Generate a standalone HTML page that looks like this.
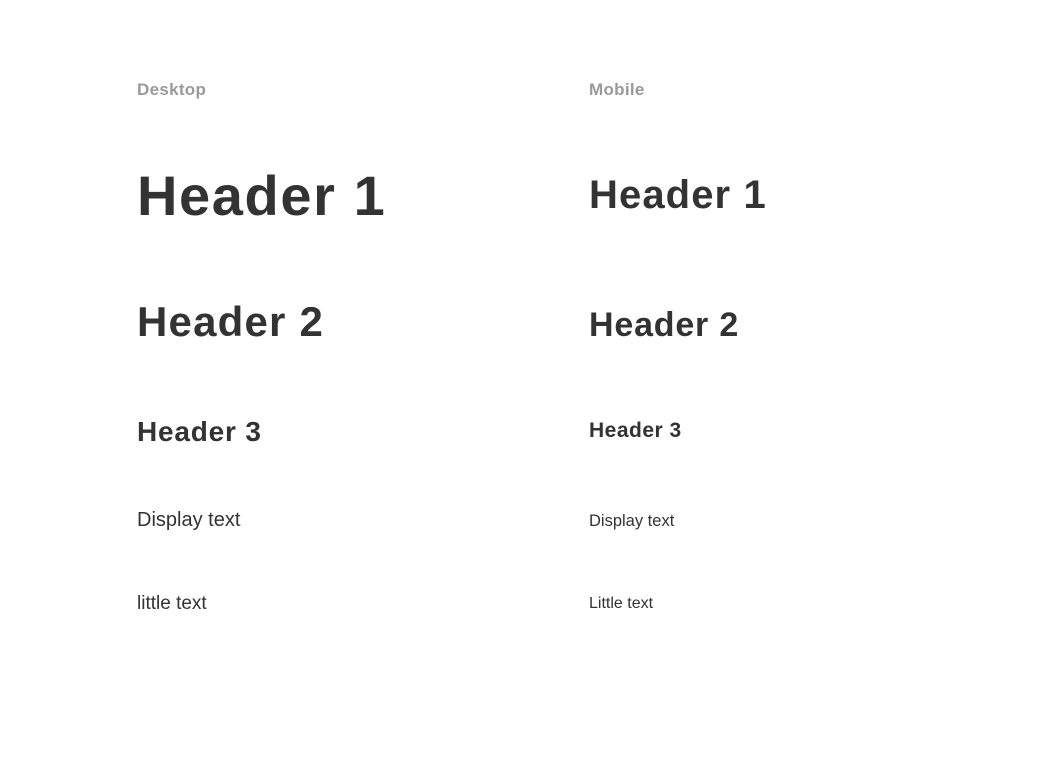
<!DOCTYPE html>
<html><head><meta charset="utf-8"><style>
html,body{margin:0;padding:0;background:#fff;width:1049px;height:758px;overflow:hidden;}
body{position:relative;font-family:"Liberation Sans",Arial,sans-serif;color:#333;}
div{position:absolute;line-height:1em;white-space:nowrap;}
.lbl{font-size:17px;font-weight:bold;color:#9a9a9a;letter-spacing:0.3px;}
.b{font-weight:bold;}
</style></head><body>
<div class="lbl" style="left:137px;top:81px;">Desktop</div>
<div class="lbl" style="left:589px;top:81px;">Mobile</div>

<div class="b" style="left:137px;top:168px;font-size:56px;letter-spacing:1.6px;">Header 1</div>
<div class="b" style="left:589px;top:175px;font-size:40px;letter-spacing:1.1px;">Header 1</div>

<div class="b" style="left:137px;top:301px;font-size:42px;letter-spacing:1.2px;">Header 2</div>
<div class="b" style="left:589px;top:308px;font-size:34px;letter-spacing:0.8px;">Header 2</div>

<div class="b" style="left:137px;top:418px;font-size:28px;letter-spacing:0.8px;">Header 3</div>
<div class="b" style="left:589px;top:420px;font-size:21px;letter-spacing:0.5px;">Header 3</div>

<div style="left:137px;top:510px;font-size:20px;">Display text</div>
<div style="left:589px;top:513px;font-size:16.5px;">Display text</div>

<div style="left:137px;top:594px;font-size:19px;">little text</div>
<div style="left:589px;top:596px;font-size:16px;">Little text</div>
</body></html>
